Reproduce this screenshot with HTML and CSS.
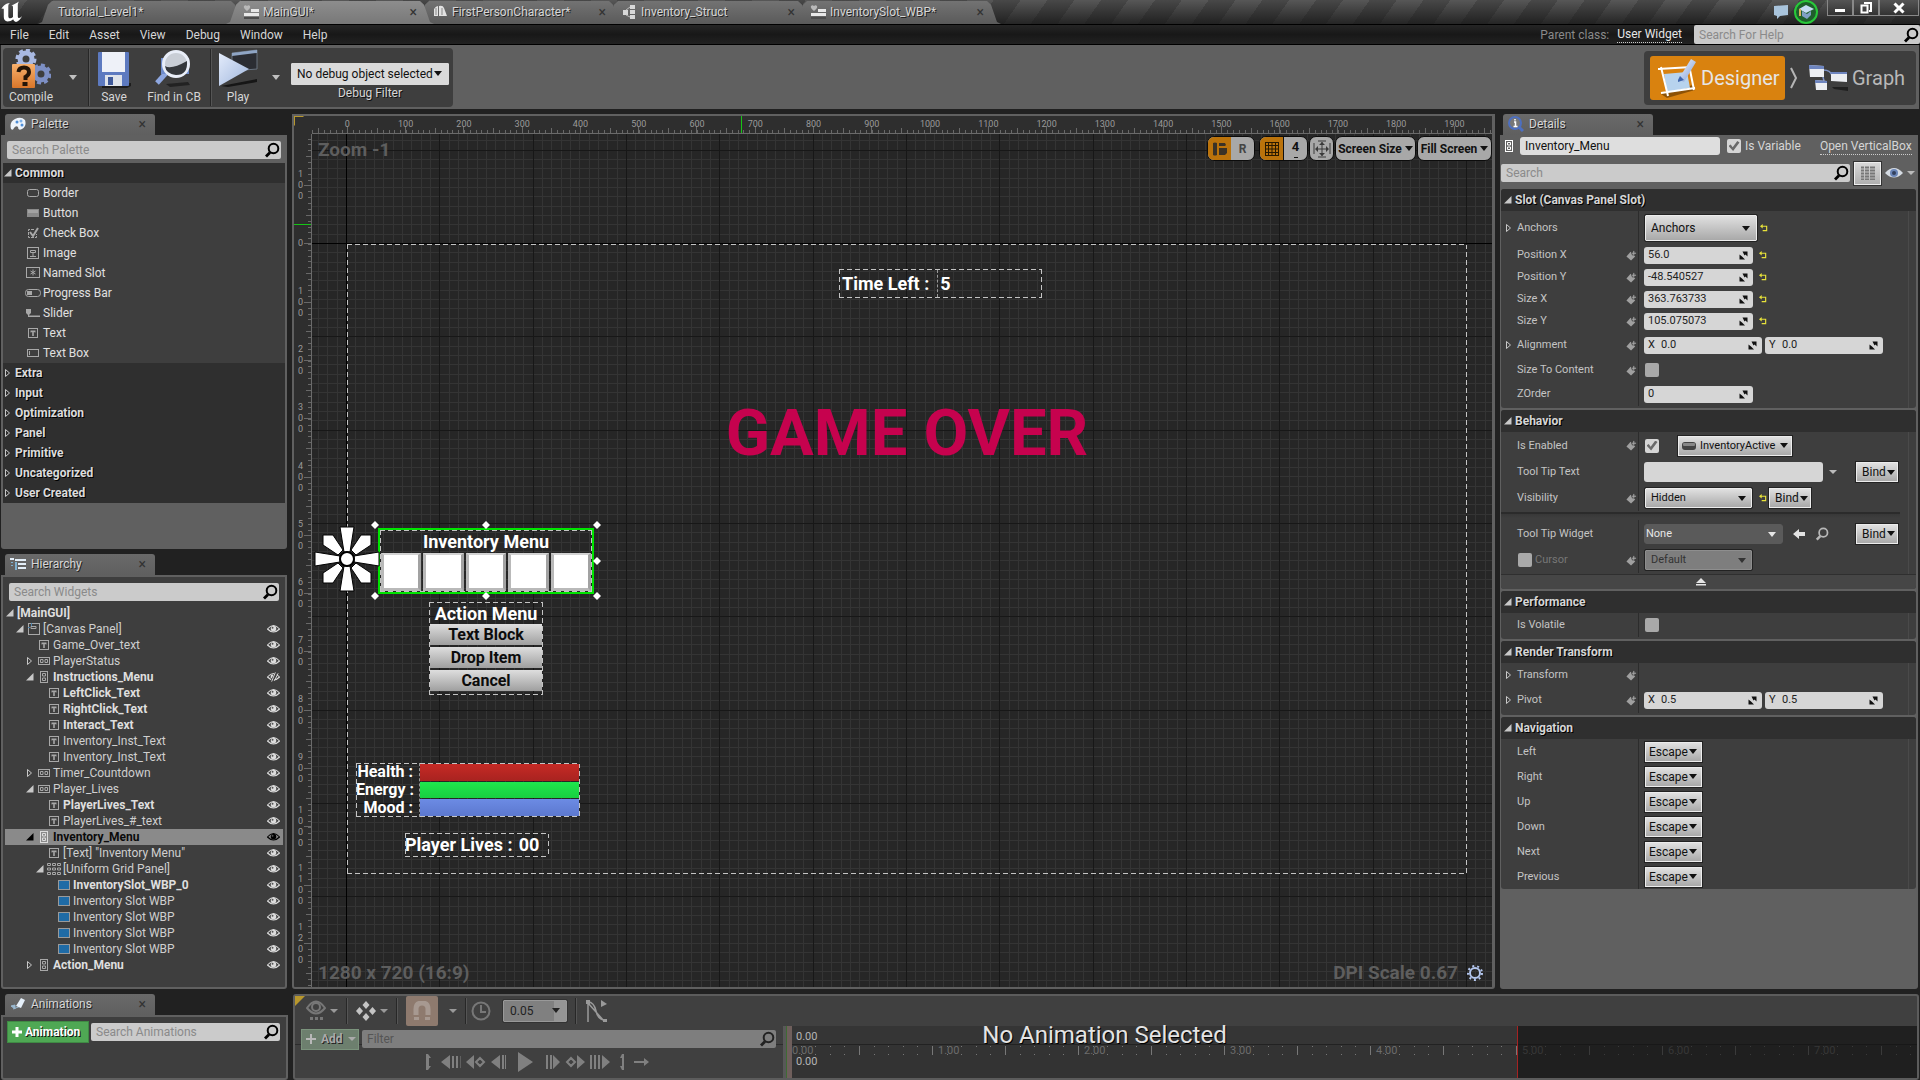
FILE: index.html
```html
<!DOCTYPE html>
<html lang="en">
<head>
<meta charset="utf-8">
<title>MainGUI - Widget Editor</title>
<link rel="stylesheet" href="styles.css">
</head>
<body>
<svg class="sprite" width="0" height="0" aria-hidden="true">
  <defs>
    <linearGradient id="g-blue" x1="0" y1="0" x2="1" y2="1"><stop offset="0" stop-color="#f4f8ff"/><stop offset="1" stop-color="#7d9bd6"/></linearGradient>
    <linearGradient id="g-play" x1="0" y1="0" x2="1" y2="1"><stop offset="0" stop-color="#e4ecfb"/><stop offset="1" stop-color="#9fb6dd"/></linearGradient>
    <linearGradient id="g-orange" x1="0" y1="0" x2="0" y2="1"><stop offset="0" stop-color="#f7b06c"/><stop offset="1" stop-color="#d9762a"/></linearGradient>
    <symbol id="i-search" viewBox="0 0 16 16"><circle cx="9.500" cy="6.500" r="4.800" fill="none" stroke="currentColor" stroke-width="2"/><path d="M6 10.500L2 14.500" stroke="currentColor" stroke-width="2.800"/></symbol>
    <symbol id="i-eye" viewBox="0 0 14 10"><path d="M0.500 5Q7 -2.500 13.500 5Q7 11.500 0.500 5z" fill="none" stroke="currentColor" stroke-width="1.200"/><circle cx="7" cy="4.600" r="3" fill="currentColor"/><circle cx="6" cy="3.600" r="1" fill="#555"/></symbol>
    <symbol id="i-eye-off" viewBox="0 0 14 10"><path d="M0.500 5Q7 -2.500 13.500 5Q7 11.500 0.500 5z" fill="none" stroke="currentColor" stroke-width="1.200"/><path d="M4 3l3-1-1 5-2-1z" fill="currentColor"/><path d="M10 0L5 10" stroke="#3e3e3e" stroke-width="3"/><path d="M9 0L5 10M12 1L8 9" stroke="currentColor" stroke-width="1"/></symbol>
    <symbol id="i-open" viewBox="0 0 8 8"><path d="M7.500 0v7.500H0z" fill="currentColor"/></symbol>
    <symbol id="i-closed" viewBox="0 0 8 8"><path d="M1.500 0.500L5.500 4L1.500 7.500z" fill="none" stroke="currentColor"/></symbol>
    <symbol id="i-text" viewBox="0 0 10 10"><rect x="0.500" y="0.500" width="9" height="9" fill="none" stroke="currentColor"/><path d="M2.500 2.500h5v2h-1v-0.500h-0.700v4h-1.600v-4h-0.700v0.500h-1z" fill="currentColor"/></symbol>
    <symbol id="i-hbox" viewBox="0 0 12 8"><rect x="0.500" y="0.500" width="11" height="7" fill="none" stroke="currentColor"/><path d="M2.500 2.500h2.500v3h-2.500zM7 2.500h2.500v3h-2.500z" fill="none" stroke="currentColor"/></symbol>
    <symbol id="i-vbox" viewBox="0 0 8 12"><rect x="0.500" y="0.500" width="7" height="11" fill="none" stroke="currentColor"/><path d="M2.500 2.500h3v2.500h-3zM2.500 7h3v2.500h-3z" fill="none" stroke="currentColor"/></symbol>
    <symbol id="i-canvas" viewBox="0 0 12 12"><rect x="0.500" y="0.500" width="11" height="11" fill="none" stroke="currentColor"/><path d="M3 3.500h5v2h-5z" fill="none" stroke="currentColor"/><path d="M3.500 0v3M0 4.500h2" stroke="#4f86b0"/></symbol>
    <symbol id="i-grid" viewBox="0 0 14 12"><path d="M0.500 0.500h3v2h-3zM5.500 0.500h3v2h-3zM10.500 0.500h3v2h-3zM0.500 5h3v2h-3zM5.500 5h3v2h-3zM10.500 5h3v2h-3zM0.500 9.500h3v2h-3zM5.500 9.500h3v2h-3zM10.500 9.500h3v2h-3z" fill="none" stroke="currentColor"/></symbol>
    <symbol id="i-slot" viewBox="0 0 12 10"><rect x="0.500" y="0.500" width="11" height="9" fill="#1f6ba6" stroke="#9a9a9a"/></symbol>
    <symbol id="i-key" viewBox="0 0 12 12"><path d="M5 2L10 7L5.500 11.500L0.500 7z" fill="#a0a0a0"/><path d="M8.500 0v6M5.500 3h6" stroke="#3e3e3e" stroke-width="3"/><path d="M8.500 1v5M6 3.500h5" stroke="#b0b0b0"/></symbol>
    <symbol id="i-reset" viewBox="0 0 9 9"><path d="M2 2.500h5.500v5H3" fill="none" stroke="#e8e23a" stroke-width="1.300"/><path d="M0 2.500L3 0v5z" fill="#e8e23a"/></symbol>
    <symbol id="i-spin" viewBox="0 0 9 9"><path d="M3.500 0.500H8.500v5L6.500 3.500L5.500 4.500zM0.500 3.500v5h5.500L4 6.500L3 5.500z" fill="currentColor"/></symbol>
    <symbol id="i-widget" viewBox="0 0 16 16"><path d="M4 7Q0 4 1 2Q2.500 0.500 4 2Q5.500 0.500 7 2Q8 4 4 7z" fill="#b9b9b9"/><path d="M8 5h8v3H8zM1 9h15v3H1z" fill="#e8e8e8"/><path d="M1 13h15v2H1z" fill="#4c4c4c"/></symbol>
  </defs>
</svg>

<header class="tabs">
  <svg class="ue-logo" viewBox="0 0 24 22"><path d="M0.500 8C2.500 4 5 2.500 9 2C7.500 3 7.300 4 7.300 5.500V15c0 1.500 0.700 2.300 1.800 2.300c1 0 2-0.500 2.900-1.300V6.500c0-1.500-0.400-2-1.700-2.200C13 3.500 15 2.500 18 0.500C17 2 16.800 3 16.800 5v10c0 1.500 0.500 2 1.300 2c0.900 0 2-0.800 3-2C19.500 18.500 17.500 20 15 21c-1.500-0.500-2.400-1.400-2.800-2.700C10.500 19.800 8.600 20.500 6.500 20.500C4 20 2.800 18.500 2.800 16V8.500C2.800 7.300 1.800 7 0.500 8z" fill="#fff"/></svg>
  <div class="tab first"><span>Tutorial_Level1*</span></div>
  <div class="tab active"><svg class="ic16"><use href="#i-widget"/></svg><span>MainGUI*</span><button class="x" aria-label="Close">×</button></div>
  <div class="tab"><svg class="ic16" viewBox="0 0 16 16"><path d="M2 12V5q2-3 4-3v10zM7 12V2q4-1 5 2l3 8z" fill="#e2e2e2"/><path d="M4 4v7M10 4v7" stroke="#888"/></svg><span>FirstPersonCharacter*</span><button class="x" aria-label="Close">×</button></div>
  <div class="tab"><svg class="ic16" viewBox="0 0 16 16"><path d="M2 6h5v5H2zM9 1h5v4H9zM9 6h5v4H9zM9 11h5v4H9z" fill="#d8d8d8"/><path d="M5 6L9 3M5 11L9 13" stroke="#bbb"/></svg><span>Inventory_Struct</span><button class="x" aria-label="Close">×</button></div>
  <div class="tab"><svg class="ic16"><use href="#i-widget"/></svg><span>InventorySlot_WBP*</span><button class="x" aria-label="Close">×</button></div>
  <div class="window-tools">
    <svg width="16" height="16" viewBox="0 0 16 16"><path d="M1 2L15 1V11L7 12L4 15V12L1 11z" fill="#a9c4dc"/></svg>
    <svg width="24" height="24" viewBox="0 0 24 24"><circle cx="12" cy="12" r="11" fill="#1f5f2b" stroke="#28c83a" stroke-width="2"/><path d="M12 5L20 9L12 13L5 9z" fill="#c6dcf3"/><path d="M8 11v5l5 3l4-4v-4l-4 3z" fill="#7f9fc4"/><path d="M6 9v7" stroke="#d8b35c" stroke-width="2"/></svg>
    <div class="win-btns">
      <button aria-label="Minimize"><svg width="12" height="12" viewBox="0 0 12 12"><path d="M1 7h10v3H1z" fill="#fff"/></svg></button>
      <button aria-label="Restore"><svg width="12" height="12" viewBox="0 0 12 12"><path d="M4 1h7v8h-2M1.500 3.500h6v7h-6z" fill="none" stroke="#fff" stroke-width="2"/></svg></button>
      <button class="wide" aria-label="Close window"><svg width="12" height="12" viewBox="0 0 12 12"><path d="M1.500 1.500l9 9M10.500 1.500l-9 9" stroke="#fff" stroke-width="3"/></svg></button>
    </div>
  </div>
</header>

<nav class="menu">
  <button>File</button><button>Edit</button><button>Asset</button><button>View</button><button>Debug</button><button>Window</button><button>Help</button>
  <div class="menu-right"><span class="dim">Parent class:</span><a href="#">User Widget</a>
    <div class="search help"><input type="text" placeholder="Search For Help" aria-label="Search For Help"><svg><use href="#i-search"/></svg></div>
  </div>
</nav>

<div class="toolbar">
  <div class="tool-group">
    <button class="tool compile"><svg width="40" height="40" viewBox="0 0 40 40"><circle cx="15" cy="10" r="6" fill="none" stroke="#a9b9e2" stroke-width="5"/><circle cx="15" cy="10" r="9" fill="none" stroke="#a9b9e2" stroke-width="3" stroke-dasharray="4 3"/><circle cx="30" cy="25" r="6" fill="none" stroke="#7d8fc4" stroke-width="5"/><circle cx="30" cy="25" r="9" fill="none" stroke="#7d8fc4" stroke-width="3" stroke-dasharray="4 3"/><rect x="1" y="15" width="23" height="24" rx="1" fill="url(#g-orange)"/><path d="M7.500 23Q8 18.500 13 18.500T18 23Q18 26 14.500 28V31" fill="none" stroke="#241508" stroke-width="4"/><rect x="11.500" y="33" width="5" height="4" fill="#241508"/></svg><span>Compile</span></button>
    <button class="drop-arrow" aria-label="Compile options"></button>
    <i class="sep"></i>
    <button class="tool save"><svg width="40" height="40" viewBox="0 0 40 40"><path d="M8 37l29-3v3l-4 2H8z" fill="#1c1c1c"/><rect x="4" y="3" width="31" height="34" rx="1" fill="#5d7ac0"/><rect x="8" y="3" width="23" height="20" fill="#eef1f8"/><rect x="11" y="26" width="17" height="11" fill="#dfe3ea"/><rect x="14" y="28" width="5" height="8" fill="#3f5999"/></svg><span>Save</span></button>
    <button class="tool find"><svg width="40" height="40" viewBox="0 0 40 40"><path d="M12 35l22-2 2 3-20 2z" fill="#222"/><path d="M12 24L3 34" stroke="#8ea7e0" stroke-width="5"/><path d="M7 9h28v16H7z" fill="#6f8ccb"/><circle cx="22" cy="15" r="12.500" fill="#c9ced6" stroke="#e9eef8" stroke-width="3"/><path d="M11 17q6 4 22-5q1 14-11 14q-10-1-11-9z" fill="#35383c"/></svg><span>Find in CB</span></button>
    <i class="sep"></i>
    <button class="tool play"><svg width="40" height="40" viewBox="0 0 40 40"><path d="M14 4l25-3v19l-25 2z" fill="#2b2d33" stroke="#68727f"/><path d="M14 4l25-3v3l-25 3z" fill="#8fa5c5"/><path d="M3 37l36-7v3L10 38z" fill="#161616"/><path d="M1 4L31 20L1 37z" fill="url(#g-play)"/></svg><span>Play</span></button>
    <button class="drop-arrow" aria-label="Play options"></button>
    <div class="debug"><div class="combo flat"><select aria-label="Debug Filter"><option>No debug object selected</option></select></div><span>Debug Filter</span></div>
  </div>
  <div class="modes">
    <button class="mode on"><svg width="40" height="44" viewBox="0 0 40 44"><path d="M4 38L36 29l2 5-28 8z" fill="#8d5206"/><path d="M7 18l23-2 3 16-23 4z" fill="#b7d3ee"/><path d="M1 13l34-2M4 37l34-5M4 11l7 29M32 9l5 25" stroke="#fff" stroke-width="2"/><path d="M21 24l13-21 5 3-12 20z" fill="url(#g-blue)"/><path d="M21 24l2-4 4 4-6 2z" fill="#3f66ad"/></svg><span>Designer</span></button>
    <svg width="8" height="22" viewBox="0 0 8 22"><path d="M1 1l5 10-5 10" fill="none" stroke="#b5b5b5" stroke-width="2"/></svg>
    <button class="mode off"><svg width="40" height="28" viewBox="0 0 40 28"><path d="M24 23h16v4L26 25z" fill="#1f1f1f"/><path d="M15 6q8 0 9 6M14 9l2 8" fill="none" stroke="#7f94c9" stroke-width="1.500"/><path d="M1 1l15 1v11H2zM23 8h16v10l-16-1zM7 16l12 1v9H8z" fill="#eceef2"/><path d="M1 1l15 1v3H1zM23 8h16v2H23zM7 16l12 1v2H7z" fill="#6e85bf"/></svg><span>Graph</span></button>
  </div>
</div>

<main class="workspace">
  <aside class="left">
    <section class="panel palette">
      <h2 class="ptab"><svg width="16" height="14" viewBox="0 0 16 14"><path d="M1 12Q-1 5 5 2Q11-1 15 3Q17 9 12 12Q8 14 8 10Q6 8 4 11Q3 14 1 12z" fill="#eef4fb"/><circle cx="7" cy="5" r="1.500" fill="#4f8fd8"/><circle cx="11" cy="4" r="1.500" fill="#7fb2e8"/><circle cx="12" cy="8" r="1.500" fill="#4f8fd8"/></svg>Palette<button class="x" aria-label="Close">×</button></h2>
      <div class="pbody">
        <div class="search"><input type="text" placeholder="Search Palette" aria-label="Search Palette"><svg><use href="#i-search"/></svg></div>
        <ul class="plist">
          <li class="cat"><svg class="tri"><use href="#i-open"/></svg>Common</li>
          <li><svg width="12" height="8" viewBox="0 0 12 8"><rect x="0.500" y="0.500" width="11" height="7" rx="2" fill="none" stroke="currentColor"/></svg>Border</li>
          <li><svg width="12" height="8" viewBox="0 0 12 8"><rect width="12" height="8" fill="#8a8a8a"/><rect x="1" y="1" width="10" height="3" fill="#a2a2a2"/></svg>Button</li>
          <li><svg width="12" height="12" viewBox="0 0 12 12"><path d="M7 2.500H1.500v8h8V7" fill="none" stroke="currentColor" stroke-dasharray="3 1"/><path d="M3 5l3 4 5-8" fill="none" stroke="currentColor" stroke-width="2"/></svg>Check Box</li>
          <li><svg width="12" height="12" viewBox="0 0 12 12"><rect x="0.500" y="0.500" width="11" height="11" fill="none" stroke="currentColor"/><path d="M6 5v4M3 9.500h6M3.500 3.500h5v2h-5z" stroke="currentColor" fill="none"/></svg>Image</li>
          <li><svg width="14" height="12" viewBox="0 0 14 12"><rect x="0.500" y="0.500" width="13" height="10" fill="none" stroke="currentColor"/><path d="M7 2.500v6M4.500 4l5 3M9.500 4l-5 3" stroke="currentColor"/></svg>Named Slot</li>
          <li><svg width="16" height="8" viewBox="0 0 16 8"><rect x="0.500" y="0.500" width="15" height="7" rx="3" fill="none" stroke="currentColor"/><rect x="2" y="2" width="5" height="4" fill="currentColor"/></svg>Progress Bar</li>
          <li><svg width="14" height="8" viewBox="0 0 14 8"><path d="M0 0h5v4l-2 2v0.500h11V8H2V6L0 4z" fill="currentColor"/></svg>Slider</li>
          <li><svg width="10" height="10"><use href="#i-text"/></svg>Text</li>
          <li><svg width="12" height="8" viewBox="0 0 12 8"><rect x="0.500" y="0.500" width="11" height="7" fill="none" stroke="currentColor"/><path d="M2.500 2v4" stroke="currentColor"/></svg>Text Box</li>
          <li class="cat"><svg class="tri"><use href="#i-closed"/></svg>Extra</li>
          <li class="cat"><svg class="tri"><use href="#i-closed"/></svg>Input</li>
          <li class="cat"><svg class="tri"><use href="#i-closed"/></svg>Optimization</li>
          <li class="cat"><svg class="tri"><use href="#i-closed"/></svg>Panel</li>
          <li class="cat"><svg class="tri"><use href="#i-closed"/></svg>Primitive</li>
          <li class="cat"><svg class="tri"><use href="#i-closed"/></svg>Uncategorized</li>
          <li class="cat"><svg class="tri"><use href="#i-closed"/></svg>User Created</li>
        </ul>
      </div>
    </section>
    <section class="panel hierarchy">
      <h2 class="ptab"><svg width="16" height="12" viewBox="0 0 16 12"><path d="M0 0h4v2H0zM5 1h11v2H5zM8 5h8v2H8zM8 9h8v2H8z" fill="#e3eef8"/><path d="M5 4h2v8H5zM1 4h2v1H1zM1 7h2v1H1z" fill="#7fb0cf"/></svg>Hierarchy<button class="x" aria-label="Close">×</button></h2>
      <div class="pbody dark">
        <div class="search"><input type="text" placeholder="Search Widgets" aria-label="Search Widgets"><svg><use href="#i-search"/></svg></div>
        <ul class="tree">
          <li class="l0 b"><svg class="tri"><use href="#i-open"/></svg><span>[MainGUI]</span></li>
          <li class="l1"><svg class="tri"><use href="#i-open"/></svg><i><svg width="12" height="12"><use href="#i-canvas"/></svg></i><span>[Canvas Panel]</span><svg class="eye"><use href="#i-eye"/></svg></li>
          <li class="l2"><svg class="tri"></svg><i><svg width="10" height="10"><use href="#i-text"/></svg></i><span>Game_Over_text</span><svg class="eye"><use href="#i-eye"/></svg></li>
          <li class="l2"><svg class="tri"><use href="#i-closed"/></svg><i><svg width="12" height="8"><use href="#i-hbox"/></svg></i><span>PlayerStatus</span><svg class="eye"><use href="#i-eye"/></svg></li>
          <li class="l2 b"><svg class="tri"><use href="#i-open"/></svg><i><svg width="8" height="12"><use href="#i-vbox"/></svg></i><span>Instructions_Menu</span><svg class="eye"><use href="#i-eye-off"/></svg></li>
          <li class="l3 b"><svg class="tri"></svg><i><svg width="10" height="10"><use href="#i-text"/></svg></i><span>LeftClick_Text</span><svg class="eye"><use href="#i-eye"/></svg></li>
          <li class="l3 b"><svg class="tri"></svg><i><svg width="10" height="10"><use href="#i-text"/></svg></i><span>RightClick_Text</span><svg class="eye"><use href="#i-eye"/></svg></li>
          <li class="l3 b"><svg class="tri"></svg><i><svg width="10" height="10"><use href="#i-text"/></svg></i><span>Interact_Text</span><svg class="eye"><use href="#i-eye"/></svg></li>
          <li class="l3"><svg class="tri"></svg><i><svg width="10" height="10"><use href="#i-text"/></svg></i><span>Inventory_Inst_Text</span><svg class="eye"><use href="#i-eye"/></svg></li>
          <li class="l3"><svg class="tri"></svg><i><svg width="10" height="10"><use href="#i-text"/></svg></i><span>Inventory_Inst_Text</span><svg class="eye"><use href="#i-eye"/></svg></li>
          <li class="l2"><svg class="tri"><use href="#i-closed"/></svg><i><svg width="12" height="8"><use href="#i-hbox"/></svg></i><span>Timer_Countdown</span><svg class="eye"><use href="#i-eye"/></svg></li>
          <li class="l2"><svg class="tri"><use href="#i-open"/></svg><i><svg width="12" height="8"><use href="#i-hbox"/></svg></i><span>Player_Lives</span><svg class="eye"><use href="#i-eye"/></svg></li>
          <li class="l3 b"><svg class="tri"></svg><i><svg width="10" height="10"><use href="#i-text"/></svg></i><span>PlayerLives_Text</span><svg class="eye"><use href="#i-eye"/></svg></li>
          <li class="l3"><svg class="tri"></svg><i><svg width="10" height="10"><use href="#i-text"/></svg></i><span>PlayerLives_#_text</span><svg class="eye"><use href="#i-eye"/></svg></li>
          <li class="l2 b sel"><svg class="tri"><use href="#i-open"/></svg><i><svg width="8" height="12"><use href="#i-vbox"/></svg></i><span>Inventory_Menu</span><svg class="eye"><use href="#i-eye"/></svg></li>
          <li class="l3"><svg class="tri"></svg><i><svg width="10" height="10"><use href="#i-text"/></svg></i><span>[Text] "Inventory Menu"</span><svg class="eye"><use href="#i-eye"/></svg></li>
          <li class="l3"><svg class="tri"><use href="#i-open"/></svg><i><svg width="14" height="12"><use href="#i-grid"/></svg></i><span>[Uniform Grid Panel]</span><svg class="eye"><use href="#i-eye"/></svg></li>
          <li class="l4 b"><svg class="tri"></svg><i><svg width="12" height="10"><use href="#i-slot"/></svg></i><span>InventorySlot_WBP_0</span><svg class="eye"><use href="#i-eye"/></svg></li>
          <li class="l4"><svg class="tri"></svg><i><svg width="12" height="10"><use href="#i-slot"/></svg></i><span>Inventory Slot WBP</span><svg class="eye"><use href="#i-eye"/></svg></li>
          <li class="l4"><svg class="tri"></svg><i><svg width="12" height="10"><use href="#i-slot"/></svg></i><span>Inventory Slot WBP</span><svg class="eye"><use href="#i-eye"/></svg></li>
          <li class="l4"><svg class="tri"></svg><i><svg width="12" height="10"><use href="#i-slot"/></svg></i><span>Inventory Slot WBP</span><svg class="eye"><use href="#i-eye"/></svg></li>
          <li class="l4"><svg class="tri"></svg><i><svg width="12" height="10"><use href="#i-slot"/></svg></i><span>Inventory Slot WBP</span><svg class="eye"><use href="#i-eye"/></svg></li>
          <li class="l2 b"><svg class="tri"><use href="#i-closed"/></svg><i><svg width="8" height="12"><use href="#i-vbox"/></svg></i><span>Action_Menu</span><svg class="eye"><use href="#i-eye"/></svg></li>
        </ul>
      </div>
    </section>
  </aside>

  <section class="designer corner">
    <div class="ruler-h"><ol><li></li><li>0</li><li>100</li><li>200</li><li>300</li><li>400</li><li>500</li><li>600</li><li>700</li><li>800</li><li>900</li><li>1000</li><li>1100</li><li>1200</li><li>1300</li><li>1400</li><li>1500</li><li>1600</li><li>1700</li><li>1800</li><li>1900</li><li></li></ol><b class="cursor-mark"></b></div>
    <div class="ruler-v"><ol><li></li><li>1<br>0<br>0</li><li>0</li><li>1<br>0<br>0</li><li>2<br>0<br>0</li><li>3<br>0<br>0</li><li>4<br>0<br>0</li><li>5<br>0<br>0</li><li>6<br>0<br>0</li><li>7<br>0<br>0</li><li>8<br>0<br>0</li><li>9<br>0<br>0</li><li>1<br>0<br>0<br>0</li><li>1<br>1<br>0<br>0</li><li>1<br>2<br>0<br>0</li><li></li></ol><b class="cursor-mark"></b></div>
    <div class="canvas">
      <svg class="grid-bg" aria-hidden="true">
        <defs><pattern id="grid" x="34" y="109" width="280" height="280" patternUnits="userSpaceOnUse">
          <path d="M9.500 0v280M19.500 0v280M28.500 0v280M37.500 0v280M47.500 0v280M56.500 0v280M65.500 0v280M75.500 0v280M84.500 0v280M103.500 0v280M112.500 0v280M121.500 0v280M131.500 0v280M140.500 0v280M149.500 0v280M159.500 0v280M168.500 0v280M177.500 0v280M196.500 0v280M205.500 0v280M215.500 0v280M224.500 0v280M233.500 0v280M243.500 0v280M252.500 0v280M261.500 0v280M271.500 0v280M0 9.500h280M0 19.500h280M0 28.500h280M0 37.500h280M0 47.500h280M0 56.500h280M0 65.500h280M0 75.500h280M0 84.500h280M0 103.500h280M0 112.500h280M0 121.500h280M0 131.500h280M0 140.500h280M0 149.500h280M0 159.500h280M0 168.500h280M0 177.500h280M0 196.500h280M0 205.500h280M0 215.500h280M0 224.500h280M0 233.500h280M0 243.500h280M0 252.500h280M0 261.500h280M0 271.500h280" stroke="#343434"/>
          <path d="M0.500 0v280M93.500 0v280M187.500 0v280M0 0.500h280M0 93.500h280M0 187.500h280" stroke="#171717"/>
        </pattern></defs>
        <rect width="100%" height="100%" fill="url(#grid)"/>
        <path d="M34.500 0v2000M0 109.500h4000" stroke="#000"/>
      </svg>
      <p class="hud zoom">Zoom -1</p>
      <p class="hud res">1280 x 720 (16:9)</p>
      <p class="hud dpi">DPI Scale 0.67 <svg width="18" height="18" viewBox="0 0 18 18"><circle cx="9" cy="9" r="5" fill="none" stroke="#b3c6ee" stroke-width="2"/><circle cx="9" cy="9" r="7" fill="none" stroke="#b3c6ee" stroke-width="2" stroke-dasharray="2 3"/></svg></p>

      <div class="stage">
        <div class="widget timer dash"><span>Time Left :</span><span class="num">5</span></div>
        <p class="widget game-over">GAME OVER</p>
        <div class="widget inventory"><div class="dash inv-inner"><h3>Inventory Menu</h3><div class="slots"><i></i><i></i><i></i><i></i><i></i></div></div></div>
        <svg class="widget handles" width="230" height="80" viewBox="0 0 230 80"><path d="M4 0l4 4-4 4-4-4zM115 0l4 4-4 4-4-4zM226 0l4 4-4 4-4-4zM226 36l4 4-4 4-4-4zM4 71l4 4-4 4-4-4zM115 71l4 4-4 4-4-4zM226 71l4 4-4 4-4-4z" fill="#fff"/></svg>
        <svg class="widget anchor" width="66" height="66" viewBox="-33 -33 66 66"><g fill="#fff" stroke="#000" stroke-width="1"><path d="M-7-32H7L3-7H-3z"/><path d="M-7-32H7L3-7H-3z" transform="rotate(90)"/><path d="M-7-32H7L3-7H-3z" transform="rotate(180)"/><path d="M-7-32H7L3-7H-3z" transform="rotate(270)"/><path d="M-24-24H-14L-4-9L-9-4L-24-14z"/><path d="M-24-24H-14L-4-9L-9-4L-24-14z" transform="rotate(90)"/><path d="M-24-24H-14L-4-9L-9-4L-24-14z" transform="rotate(180)"/><path d="M-24-24H-14L-4-9L-9-4L-24-14z" transform="rotate(270)"/><circle r="7" stroke-width="2"/></g></svg>
        <div class="widget action dash"><h3>Action Menu</h3><button>Text Block</button><button>Drop Item</button><button>Cancel</button></div>
        <div class="widget status dash"><div class="names"><span>Health :</span><span>Energy :</span><span>Mood :</span></div><div class="bars"><i class="red"></i><i class="green"></i><i class="blue"></i></div></div>
        <div class="widget lives dash"><span>Player Lives :</span><span>00</span></div>
      </div>

      <div class="view-tools">
        <div class="pair"><button class="on" aria-label="Localization preview"><svg width="16" height="14" viewBox="0 0 16 14"><path d="M1 1q2-1 4 0v12q-2 1-4 0zM7 1h6l1 2-1 1H7zM7 6h8v5l-2 2H7z" fill="#3a3226"/></svg></button><button class="r">R</button></div>
        <div class="pair"><button class="on" aria-label="Grid snapping"><svg width="14" height="14" viewBox="0 0 14 14"><path d="M0.500 0v14M3.500 0v14M7 0v14M10.500 0v14M13.500 0v14M0 0.500h14M0 3.500h14M0 7h14M0 10.500h14M0 13.500h14" stroke="#2a1a00"/></svg></button><button class="snap">4</button></div>
        <button class="pill" aria-label="Zoom to fit"><svg width="18" height="18" viewBox="0 0 18 18"><path d="M1 3v11M17 3v11M5 1h8M5 17h8M9 2v14M3 9h12" stroke="#3a3a3a" fill="none"/><path d="M6 5l3-3 3 3zM6 13l3 3 3-3zM5 6v6L2 9zM13 6v6l3-3z" fill="#3a3a3a"/></svg></button>
        <button class="pill txt screen">Screen Size</button>
        <button class="pill txt fill">Fill Screen</button>
      </div>
    </div>
  </section>

  <aside class="panel details">
    <h2 class="ptab"><svg width="16" height="16" viewBox="0 0 16 16"><path d="M11 11l4 4" stroke="#4d6fc0" stroke-width="3"/><circle cx="7" cy="7" r="6" fill="#777" stroke="#4d6fc0" stroke-width="2"/><path d="M7 3v1.500M6 6h1.500v4M5.500 10.500h4" stroke="#fff" stroke-width="1.500" fill="none"/></svg>Details<button class="x" aria-label="Close">×</button></h2>
    <div class="pbody">
      <div class="dname"><svg width="8" height="12"><use href="#i-vbox"/></svg><input class="name" type="text" value="Inventory_Menu" aria-label="Widget name"><input type="checkbox" id="isvar" checked><label for="isvar">Is Variable</label><a href="#">Open VerticalBox</a></div>
      <div class="dsearch"><div class="search"><input type="text" placeholder="Search" aria-label="Search details"><svg><use href="#i-search"/></svg></div><button class="matrix" aria-label="Property matrix"><svg width="14" height="14" viewBox="0 0 14 14"><path d="M0 1.500h3M4 1.500h4M9 1.500h5M0 4.500h3M4 4.500h4M9 4.500h5M0 7.500h3M4 7.500h4M9 7.500h5M0 10.500h3M4 10.500h4M9 10.500h5M0 13.500h3M4 13.500h4M9 13.500h5" stroke="#777" stroke-width="2"/></svg></button><svg width="18" height="12" viewBox="0 0 18 12"><path d="M0 6Q9-4 18 6Q9 15 0 6z" fill="#d5dbe3"/><circle cx="9" cy="6" r="4" fill="#6b86b8"/><circle cx="9" cy="6" r="2" fill="#33415e"/></svg><i class="arrow"></i></div>

      <section class="group">
        <h3><svg class="tri"><use href="#i-open"/></svg>Slot (Canvas Panel Slot)</h3>
        <div class="rows">
          <div class="row h33"><div class="lab"><svg class="tri"><use href="#i-closed"/></svg><label for="anchors">Anchors</label></div><div class="combo w112 tall"><select id="anchors"><option>Anchors</option></select></div><svg class="reset"><use href="#i-reset"/></svg></div>
          <div class="row h22"><div class="lab"><label for="px">Position X</label><svg class="key"><use href="#i-key"/></svg></div><div class="num-in w109"><input id="px" type="text" value="56.0"><svg><use href="#i-spin"/></svg></div><svg class="reset"><use href="#i-reset"/></svg></div>
          <div class="row h22"><div class="lab"><label for="py">Position Y</label><svg class="key"><use href="#i-key"/></svg></div><div class="num-in w109"><input id="py" type="text" value="-48.540527"><svg><use href="#i-spin"/></svg></div><svg class="reset"><use href="#i-reset"/></svg></div>
          <div class="row h22"><div class="lab"><label for="sx">Size X</label><svg class="key"><use href="#i-key"/></svg></div><div class="num-in w109"><input id="sx" type="text" value="363.763733"><svg><use href="#i-spin"/></svg></div><svg class="reset"><use href="#i-reset"/></svg></div>
          <div class="row h22"><div class="lab"><label for="sy">Size Y</label><svg class="key"><use href="#i-key"/></svg></div><div class="num-in w109"><input id="sy" type="text" value="105.075073"><svg><use href="#i-spin"/></svg></div><svg class="reset"><use href="#i-reset"/></svg></div>
          <div class="row h26"><div class="lab"><svg class="tri"><use href="#i-closed"/></svg><span>Alignment</span><svg class="key"><use href="#i-key"/></svg></div><div class="num-in w118"><label for="ax">X</label><input id="ax" type="text" value="0.0"><svg><use href="#i-spin"/></svg></div><div class="num-in w118"><label for="ay">Y</label><input id="ay" type="text" value="0.0"><svg><use href="#i-spin"/></svg></div></div>
          <div class="row h24"><div class="lab"><label for="stc">Size To Content</label><svg class="key"><use href="#i-key"/></svg></div><input type="checkbox" id="stc"></div>
          <div class="row h24"><div class="lab"><label for="zo">ZOrder</label></div><div class="num-in w109"><input id="zo" type="text" value="0"><svg><use href="#i-spin"/></svg></div></div>
        </div>
      </section>

      <section class="group">
        <h3><svg class="tri"><use href="#i-open"/></svg>Behavior</h3>
        <div class="rows flush">
          <div class="row h27"><div class="lab"><label for="en">Is Enabled</label><svg class="key"><use href="#i-key"/></svg></div><input type="checkbox" id="en" checked><button class="btn bound"><svg width="14" height="8" viewBox="0 0 14 8"><rect width="14" height="8" rx="3" fill="#444"/><rect x="1" y="1" width="12" height="3" rx="1" fill="#888"/></svg>InventoryActive<i class="arrow"></i></button></div>
          <div class="row h26"><div class="lab"><label for="ttt">Tool Tip Text</label></div><input id="ttt" class="plain" type="text"><i class="arrow light"></i><button class="btn bind end">Bind<i class="arrow"></i></button></div>
          <div class="row h26"><div class="lab"><label for="vis">Visibility</label><svg class="key"><use href="#i-key"/></svg></div><div class="combo w109"><select id="vis"><option>Hidden</option></select></div><svg class="reset"><use href="#i-reset"/></svg><button class="btn bind">Bind<i class="arrow"></i></button></div>
          <hr>
          <div class="row h27"><div class="lab"><label for="ttw">Tool Tip Widget</label></div><div class="combo w139 darkc"><select id="ttw"><option>None</option></select></div><svg class="back" width="12" height="12" viewBox="0 0 12 12"><path d="M0 6l6-5v3h6v4H6v3z" fill="#e2e2e2"/></svg><svg class="mag" width="14" height="14"><use href="#i-search"/></svg><button class="btn bind end">Bind<i class="arrow"></i></button></div>
          <div class="row h26"><div class="lab cur"><input type="checkbox" id="cur"><label for="cur">Cursor</label><svg class="key"><use href="#i-key"/></svg></div><div class="combo w109 off"><select aria-label="Cursor" disabled><option>Default</option></select></div></div>
          <button class="more" aria-label="Hide advanced"><svg width="10" height="8" viewBox="0 0 10 8"><path d="M5 0l5 5H0zM0 6h10v1.500H0z" fill="#e6e6e6"/></svg></button>
        </div>
      </section>

      <section class="group">
        <h3><svg class="tri"><use href="#i-open"/></svg>Performance</h3>
        <div class="rows"><div class="row h24"><div class="lab"><label for="vol">Is Volatile</label></div><input type="checkbox" id="vol"></div></div>
      </section>

      <section class="group">
        <h3><svg class="tri"><use href="#i-open"/></svg>Render Transform</h3>
        <div class="rows">
          <div class="row h24"><div class="lab"><svg class="tri"><use href="#i-closed"/></svg><span>Transform</span><svg class="key"><use href="#i-key"/></svg></div></div>
          <div class="row h26"><div class="lab"><svg class="tri"><use href="#i-closed"/></svg><span>Pivot</span><svg class="key"><use href="#i-key"/></svg></div><div class="num-in w118"><label for="pvx">X</label><input id="pvx" type="text" value="0.5"><svg><use href="#i-spin"/></svg></div><div class="num-in w118"><label for="pvy">Y</label><input id="pvy" type="text" value="0.5"><svg><use href="#i-spin"/></svg></div></div>
        </div>
      </section>

      <section class="group">
        <h3><svg class="tri"><use href="#i-open"/></svg>Navigation</h3>
        <div class="rows flush">
          <div class="row h25"><div class="lab">Left</div><button class="btn esc">Escape<i class="arrow"></i></button></div>
          <div class="row h25"><div class="lab">Right</div><button class="btn esc">Escape<i class="arrow"></i></button></div>
          <div class="row h25"><div class="lab">Up</div><button class="btn esc">Escape<i class="arrow"></i></button></div>
          <div class="row h25"><div class="lab">Down</div><button class="btn esc">Escape<i class="arrow"></i></button></div>
          <div class="row h25"><div class="lab">Next</div><button class="btn esc">Escape<i class="arrow"></i></button></div>
          <div class="row h25"><div class="lab">Previous</div><button class="btn esc">Escape<i class="arrow"></i></button></div>
        </div>
      </section>
    </div>
  </aside>
</main>

<footer class="bottom">
  <section class="panel animations">
    <h2 class="ptab"><svg width="16" height="14" viewBox="0 0 16 14"><path d="M1 9l4-1v4zM3 12l8-3" stroke="#99b8d0" fill="#99b8d0"/><path d="M6 9l5-8 4 2-4 8z" fill="#e6f0fa"/></svg>Animations<button class="x" aria-label="Close">×</button></h2>
    <div class="pbody dark">
      <div class="anim-bar"><button class="add"><svg width="10" height="10" viewBox="0 0 10 10"><path d="M3.500 0h3v3.500H10v3H6.500V10h-3V6.500H0v-3h3.500z" fill="#fff"/></svg>Animation</button><div class="search"><input type="text" placeholder="Search Animations" aria-label="Search Animations"><svg><use href="#i-search"/></svg></div></div>
    </div>
  </section>
  <section class="sequencer corner">
    <div class="seq-tools">
      <svg width="20" height="22" viewBox="0 0 20 22"><path d="M1 8Q10-5 19 8Q10 19 1 8z" fill="none" stroke="#777" stroke-width="2"/><circle cx="10" cy="7" r="4" fill="none" stroke="#777" stroke-width="2"/><path d="M4 17h3v3H4zM9 17h3v3H9zM14 17h3v3h-3z" fill="#777"/></svg><i class="arrow"></i><i class="sep"></i>
      <svg width="20" height="20" viewBox="0 0 20 20"><path d="M10 0l3.500 4-3.500 4-3.500-4zM10 12l3.500 4-3.500 4-3.500-4zM3.500 6L7 10l-3.500 4L0 10zM16.500 6l3.500 4-3.500 4-3.500-4z" fill="#c4c4c4"/></svg><i class="arrow"></i><i class="sep"></i>
      <button class="magnet" aria-label="Snapping"><svg width="18" height="20" viewBox="0 0 18 20"><path d="M3 14V8q0-6 6-6t6 6v6" fill="none" stroke="#a79991" stroke-width="5"/><path d="M1 16h5v3H1zM12 16h5v3h-5z" fill="#a79991"/></svg></button><i class="arrow wide"></i><i class="sep tight"></i>
      <svg width="20" height="20" viewBox="0 0 20 20"><circle cx="10" cy="10" r="8.500" fill="none" stroke="#777" stroke-width="2"/><path d="M10 4v7h5" fill="none" stroke="#777" stroke-width="2"/></svg>
      <div class="combo snapc"><select aria-label="Time snapping"><option>0.05</option></select></div><i class="sep"></i>
      <svg width="22" height="24" viewBox="0 0 22 24"><path d="M3 23V3Q9 3 11 12T20 21M3 4L19 22" fill="none" stroke="#9a9a9a" stroke-width="1.500"/><path d="M1 1h4v4H1zM18 20h4v3h-4zM16 1l6 4-6 3z" fill="#9a9a9a"/></svg>
    </div>
    <div class="seq-body">
      <div class="seq-left">
        <div class="seq-filter"><button class="addtrack"><svg width="10" height="10" viewBox="0 0 10 10"><path d="M4 0h2v4h4v2H6v4H4V6H0V4h4z" fill="#b8b8b8"/></svg>Add<i class="arrow"></i></button><div class="search"><input type="text" placeholder="Filter" aria-label="Filter"><svg><use href="#i-search"/></svg></div></div>
        <svg class="transport" width="226" height="20" viewBox="0 0 226 20" fill="#808080"><path d="M0 2h2l3 4H3v8h2l-3 4H0zM24 3v14L15 10zM26 4h2v12h-2zM30 4h2v12h-2zM34 4h0.500v12h-0.500zM48 3v14l-8-7zM74 3v14l-9-7zM76 3h2v14h-2zM79 3h1v14h-1zM92 0l15 10-15 10zM120 3h2v14h-2zM124 3h2v14h-2zM127 3l7 7-7 7zM151 3l8 7-8 7zM164 3h2v14h-2zM168 3h2v14h-2zM172 3h2v14h-2zM176 3l8 7-8 7zM198 2h-2l-2 4h2v8h-2l2 4h2zM208 9h10V6l5 4-5 4v-3h-10z"/><path d="M54 6l4 4-4 4-4-4zM145 6l4 4-4 4-4-4z" fill="none" stroke="#808080" stroke-width="2"/></svg>
      </div>
      <div class="timeline">
        <b class="start"></b>
        <span class="t-now">0.00</span><span class="t-end">0.00</span>
        <ol><li>0.00</li><li>1.00</li><li>2.00</li><li>3.00</li><li>4.00</li><li class="out">5.00</li><li class="out">6.00</li><li class="out">7.00</li></ol>
      </div>
    </div>
    <p class="noanim">No Animation Selected</p>
  </section>
</footer>
</body>
</html>
```
FILE: styles.css
```css
* { box-sizing: border-box; }
html, body { height: 100%; }
body {
  margin: 0; min-height: 100vh; display: flex; flex-direction: column; overflow: hidden;
  background: #212121; color: #d6d6d6; font: 12px/16px Roboto, "Liberation Sans", sans-serif;
}
h2, h3, p, ul, ol, hr { margin: 0; padding: 0; font: inherit; list-style: none; border: 0; }
button, input, select { font: inherit; color: inherit; margin: 0; padding: 0; border: 0; background: none; }
i { font-style: normal; }
svg { flex: none; display: block; }
.sprite { position: absolute; }
.x { color: #333; font-size: 14px; line-height: 14px; margin-left: auto; }
.tri { width: 8px; height: 8px; }
.arrow { width: 0; height: 0; border: 5px solid transparent; border-top-color: #111; border-bottom: 0; flex: none; }
.sep { width: 2px; align-self: stretch; background: #272727; border-right: 1px solid #555; flex: none; }

/* window tabs */
.tabs {
  height: 25px; flex: none; display: flex; padding-left: 38px; position: relative;
  background: linear-gradient(rgba(20,20,20,0), rgba(20,20,20,.75)), repeating-linear-gradient(125deg, #575757 0 22px, #484848 22px 44px);
  border-bottom: 1px solid #000;
}
.ue-logo { position: absolute; left: 1px; top: 1px; width: 24px; height: 22px; }
.tab {
  width: 208px; margin-right: -19px; padding: 0 17px 0 17px; display: flex; align-items: center; gap: 4px;
  background: linear-gradient(#747474, #5a5a5a);
  clip-path: polygon(0 100%, 4px 92%, 10px 20%, 14px 4%, calc(100% - 14px) 4%, calc(100% - 10px) 20%, calc(100% - 4px) 92%, 100% 100%);
  text-shadow: 1px 1px #222;
}
.tab.first { padding-left: 20px; width: 207px; }
.tab.active { background: linear-gradient(#8e8e8e, #787878); z-index: 1; }
.ic16 { width: 16px; height: 16px; }
.window-tools { margin-left: auto; display: flex; gap: 5px; align-items: center; padding-right: 1px; }
.win-btns { display: flex; align-self: flex-start; margin-left: 4px; }
.win-btns button { width: 26px; height: 16px; border: 1px solid #888; border-top: 0; display: grid; place-items: center; background: linear-gradient(#555, #333); }
.win-btns .wide { width: 40px; }

.menu {
  height: 20px; flex: none; display: flex; align-items: center; padding-left: 10px; gap: 20px;
  background: linear-gradient(#252525, #181818 50%, #222); border-bottom: 1px solid #000;
}
.menu-right { margin-left: auto; display: flex; align-items: center; gap: 8px; height: 100%; }
.menu-right .dim { color: #8a8a8a; }
.menu-right a { color: #e6e6e6; text-decoration: none; border-bottom: 1px dotted #ccc; }
.search { display: flex; align-items: center; height: 18px; background: #cbcbcb; border-radius: 2px; padding-right: 1px; }
.search input { flex: 1; min-width: 0; padding-left: 5px; color: #222; outline: 0; }
.search input::placeholder { color: #8a8a8a; opacity: 1; }
.search svg { width: 16px; height: 16px; color: #000; }
.search.help { width: 226px; height: 19px; margin-left: 4px; }

/* toolbar */
.toolbar { height: 64px; flex: none; margin: 0 1px; padding: 3px 2px 2px; background: #606060; display: flex; justify-content: space-between; }
.tool-group { display: flex; background: #3e3e3e; border-radius: 4px; width: 450px; padding-left: 1px; text-shadow: 1px 1px #111; }
.tool-group .sep { margin: 1px 0; }
.tool { display: flex; flex-direction: column; align-items: center; padding-top: 1px; }
.tool.compile { width: 54px; margin-right: 3px; }
.compile + .drop-arrow { margin-right: 3px; }
.tool.save { width: 48px; }
.tool.find { width: 72px; }
.tool.play { width: 52px; }
.drop-arrow { width: 24px; height: 59px; display: grid; place-items: center; }
.drop-arrow::after { content: ""; border: 4px solid transparent; border-top: 5px solid #c0c0c0; border-bottom: 0; }
.debug { margin-left: 3px; display: flex; flex-direction: column; align-items: center; padding-top: 15px; }
.modes { display: flex; align-items: center; gap: 5px; width: 272px; background: #3e3e3e; border-radius: 4px; margin: 3px 1px 2px 0; padding: 4px 6px; font-size: 20px; line-height: 24px; color: #b8b8b8; }
.mode { display: flex; align-items: center; height: 44px; gap: 4px; }
.mode.on { background: #d9820f; border-radius: 3px; color: #e6e6e6; width: 135px; padding-left: 7px; }
.mode.off { margin-left: 5px; }

.combo { position: relative; display: flex; height: 20px; color: #111; }
.combo select { appearance: none; width: 100%; padding: 0 18px 0 5px; border: 1px solid #ececec; outline: 1px solid #222; border-radius: 1px; background: linear-gradient(#e0e0e0, #a9a9a9); color: inherit; opacity: 1; }
.combo::after { content: ""; position: absolute; right: 7px; top: 8px; border: 4px solid transparent; border-top: 5px solid currentColor; border-bottom: 0; }
.combo.flat { width: 158px; height: 22px; text-shadow: none; }
.combo.flat select { background: #dadada; outline: 0; padding-right: 0; border-color: #dadada; }
.combo.w112 { width: 112px; } .combo.w109 { width: 109px; padding: 0 1px; } .combo.w139 { width: 139px; }
.combo.tall { height: 26px; margin-left: 1px; } .combo.tall select { font-size: 12px; padding-left: 5px; } .combo.tall::after { top: 11px; }
.combo.darkc { color: #e6e6e6; } .combo.darkc select { background: #5a5a5a; border-color: #5a5a5a; outline: 0; padding-left: 1px; border-radius: 3px; }
.combo.off { color: #333; } .combo.off select { background: #7e7e7e; border-color: #8e8e8e; }

/* docked panels */
.workspace { flex: 1; min-height: 0; display: flex; padding: 5px 2px 0 1px; }
.left { width: 286px; flex: none; display: flex; flex-direction: column; gap: 5px; margin-right: 5px; }
.panel { display: flex; flex-direction: column; min-height: 0; }
.ptab { width: 150px; height: 21px; margin-left: 4px; padding: 0 9px 2px 5px; display: flex; align-items: center; gap: 5px; background: linear-gradient(#6a6a6a, #5f5f5f); border-radius: 3px 3px 0 0; text-shadow: 1px 1px #222; flex: none; }
.pbody { flex: 1; background: #606060; border-radius: 0 0 3px 3px; min-height: 0; }
.palette, .hierarchy { flex: 1; }
.palette .pbody { padding: 6px 2px; }
.palette .search { margin: 0 4px 4px; }
.dark { border: 2px solid #606060; background: #3e3e3e; padding-top: 6px; }
.plist li { height: 20px; display: grid; grid-template-columns: 16px 1fr; column-gap: 2px; align-items: center; padding-left: 22px; background: #3e3e3e; color: #e0e0e0; }
.plist li > svg { justify-self: center; color: #a8a8a8; }
.plist .cat { background: #2f2f2f; grid-template-columns: 8px 1fr; column-gap: 3px; padding-left: 1px; font-weight: bold; text-shadow: 1px 1px #000; color: #dcdcdc; }
.plist .cat > svg { color: #c8c8c8; }
.hierarchy .search { margin: 0 6px 4px; }
.tree li { display: flex; align-items: center; gap: 2px; height: 16px; color: #cfcfcf; margin: 0 2px; padding-right: 3px; }
.tree li > i { width: 15px; display: grid; place-items: center; color: #a8a8a8; }
.tree .b { font-weight: bold; color: #dedede; }
.tree .eye { width: 13px; height: 10px; margin-left: auto; color: #dcdcdc; }
.tree .tri { color: #c8c8c8; }
.tree .l0 { padding-left: 1px; gap: 3px; } .l1 { padding-left: 11px; } .l2 { padding-left: 21px; } .l3 { padding-left: 31px; } .l4 { padding-left: 41px; }
.tree .sel { background: #8a8a8a; color: #0a0a0a; } .tree .sel .tri, .tree .sel .eye { color: #000; } .tree .sel > i { color: #ddd; }

/* designer viewport */
.corner::before { content: ""; position: absolute; left: 0; top: 0; width: 10px; height: 10px; background: #b8972c; clip-path: polygon(0 0, 100% 0, 0 100%); z-index: -1; }
.designer { flex: 1; min-width: 0; position: relative; z-index: 0; display: grid; grid-template: 18px 1fr / 18px 1fr; border: 2px solid #606060; border-right-width: 3px; background: #2e2e2e; border-radius: 0 0 3px 3px; overflow: hidden; }
.designer::before { clip-path: polygon(0 0, 100% 0, 90% 10%, 10% 10%, 10% 90%, 0 100%); }
.ruler-h { grid-column: 2; border-bottom: 1px solid #6a6a6a; overflow: hidden; position: relative; }
.ruler-v { grid-column: 1; grid-row: 2; border-right: 1px solid #6a6a6a; overflow: hidden; position: relative; }
.ruler-h ol, .ruler-v ol { display: flex; font-size: 9px; line-height: 11px; color: #9a9a9a; }
.ruler-h ol { width: 1282px; margin-left: -52px; height: 17px; }
.ruler-v ol { height: 933px; margin-top: -36px; flex-direction: column; }
.ruler-h li { flex: 1; text-align: center; padding-top: 3px;
  background: linear-gradient(#686868, #686868) 50% 100% / 1px 7px no-repeat, linear-gradient(#686868, #686868) 0 100% / 1px 5px no-repeat, repeating-linear-gradient(90deg, #686868 0 1px, transparent 1px 10%) 0 100% / 100% 3px no-repeat; }
.ruler-v li { flex: 1; display: flex; flex-direction: column; justify-content: center; padding-left: 4px;
  background: linear-gradient(#686868, #686868) 100% 50% / 7px 1px no-repeat, linear-gradient(#686868, #686868) 100% 0 / 5px 1px no-repeat, repeating-linear-gradient(#686868 0 1px, transparent 1px 10%) 100% 0 / 3px 100% no-repeat; }
.cursor-mark { position: absolute; background: #16c516; }
.ruler-h .cursor-mark { left: 429px; top: 0; width: 1px; height: 17px; }
.ruler-v .cursor-mark { left: 0; top: 90px; width: 17px; height: 1px; }
.canvas { position: relative; overflow: hidden; background: #262626; min-height: 0; }
.grid-bg { position: absolute; width: 100%; height: 100%; }
.hud { position: absolute; font-weight: bold; font-size: 19px; line-height: 22px; color: #5e5e5e; display: flex; gap: 8px; align-items: center; }
.zoom { left: 6px; top: 5px; } .res { left: 6px; bottom: 3px; } .dpi { right: 8px; bottom: 3px; }
.stage { position: absolute; left: 35px; top: 110px; width: 1120px; height: 630px; }
.stage, .stage .dash {
  background:
    repeating-linear-gradient(90deg, #c4c4c4 0 5px, #222 5px 8px) 0 0 / 100% 1px no-repeat,
    repeating-linear-gradient(90deg, #c4c4c4 0 5px, #222 5px 8px) 0 100% / 100% 1px no-repeat,
    repeating-linear-gradient(#c4c4c4 0 5px, #222 5px 8px) 0 0 / 1px 100% no-repeat,
    repeating-linear-gradient(#c4c4c4 0 5px, #222 5px 8px) 100% 0 / 1px 100% no-repeat;
}
.widget { position: absolute; color: #fff; font-weight: bold; font-size: 18px; line-height: 22px; }
.timer { left: 492px; top: 25px; width: 203px; height: 29px; display: flex; align-items: center; padding-left: 3px; }
.timer .num { border-left: 1px dashed #999; margin-left: 8px; padding-left: 2px; line-height: 27px; }
.game-over { left: 378px; top: 149px; width: 364px; text-align: center; font-size: 65px; line-height: 80px; color: #c6024e; white-space: nowrap; }
.inventory { left: 31px; top: 284px; width: 216px; height: 66px; border: 2px solid #00e400; }
.inv-inner { height: 62px; padding: 1px; }
.widget h3 { text-align: center; height: 22px; }
.slots { display: flex; gap: 2px; }
.slots i { flex: 1; height: 38px; background: #fff; border: 3px solid #b9b9b9; border-top-color: #d2d2d2; border-right-color: #a2a2a2; border-top-width: 2px; }
.handles { left: 24px; top: 277px; }
.anchor { left: -33px; top: 282px; }
.action { left: 82px; top: 358px; width: 114px; height: 93px; padding: 1px; display: flex; flex-direction: column; gap: 2px; }
.action h3 { height: 19px; }
.action button { height: 21px; width: 100%; flex: none; background: linear-gradient(#dedede, #9f9f9f); color: #0c0c0c; font-size: 16px; line-height: 20px; font-weight: bold; }
.status { left: 9px; top: 519px; width: 224px; height: 54px; display: flex; font-size: 16px; line-height: 18px; }
.names { width: 64px; display: flex; flex-direction: column; text-align: right; padding-right: 6px; border-right: 1px dashed #999; white-space: nowrap; }
.bars { flex: 1; display: flex; flex-direction: column; gap: 1px; padding: 1px 1px 1px 0; }
.bars i { flex: 1; }
.red { background: linear-gradient(#c62a25, #a82320); } .green { background: linear-gradient(#1fe64d, #18cf40); } .blue { background: linear-gradient(#6c8be4, #5c78cf); }
.lives { left: 58px; top: 589px; width: 144px; height: 24px; display: flex; align-items: center; gap: 6px; white-space: nowrap; }
.view-tools { position: absolute; right: 0; top: 2px; display: flex; gap: 1px; color: #111; font-weight: bold; }
.pair { display: flex; border: 1px solid #0c0c0c; border-radius: 7px; overflow: hidden; background: #a8a8a8; height: 25px; margin-right: 3px; }
.pair + .pair { margin-right: 0; }
.pair button { width: 23px; display: grid; place-items: center; }
.pair .on { background: #bb730b; }
.pair .r { color: #444; }
.pair .snap { width: 24px; border-left: 1px solid #111; font-size: 13px; align-content: center; line-height: 14px; }
.snap::after { content: ""; width: 4px; height: 1px; background: #111; margin-top: 3px; }
.pill { width: 25px; height: 25px; background: #a8a8a8; border: 1px solid #0c0c0c; border-radius: 7px; display: flex; align-items: center; justify-content: center; gap: 3px; white-space: nowrap; }
.pill.screen { width: 81px; }
.pill.fill { width: 75px; }
.pill.txt::after { content: ""; border: 4px solid transparent; border-top: 5px solid #111; border-bottom: 0; }

/* details */
.details { width: 418px; flex: none; margin-left: 5px; }
.details .ptab { margin-left: 3px; }
.details .pbody { padding: 2px 2px 0 1px; }
.dname { display: flex; align-items: center; height: 18px; padding-left: 4px; overflow: hidden; white-space: nowrap; }
.dname svg { color: #fff; }
.name { width: 200px; height: 18px; background: #dedede; border-radius: 3px; color: #111; padding-left: 5px; margin: 0 7px; flex: none; }
.dname label { margin: 0 19px 0 4px; }
.dname a { color: #d6d6d6; text-decoration: none; border-bottom: 1px dotted #ccc; }
input[type=checkbox] { appearance: none; width: 14px; height: 14px; background: #a9a9a9; border-radius: 2px; flex: none; display: grid; place-items: center; }
input[type=checkbox]:checked { background: #d5d5d5; }
input[type=checkbox]:checked::after { content: ""; width: 11px; height: 10px; background: #6a6a6a; clip-path: polygon(0 50%, 20% 35%, 38% 62%, 80% 0, 100% 14%, 42% 100%); }
.dsearch { display: flex; align-items: center; height: 24px; margin: 6px 0 4px; gap: 4px; }
.dsearch .search { flex: 1; }
.matrix { width: 27px; height: 23px; border: 1px solid #eee; outline: 1px solid #333; background: linear-gradient(#d8d8d8, #b0b0b0); display: grid; place-items: center; }
.dsearch .arrow { border-width: 4px 4px 0; border-top-color: #bbb; margin-right: 1px; }
.group { margin-bottom: 2px; border-radius: 3px; overflow: hidden; background: linear-gradient(90deg, transparent calc(100% - 8px), #4a4a4a calc(100% - 8px) calc(100% - 7px), transparent calc(100% - 7px)), #3e3e3e; }
.group h3 { height: 22px; display: flex; align-items: center; gap: 3px; padding-left: 3px; background: #2f2f2f; font-weight: bold; text-shadow: 1px 1px #000; }
.group .tri { color: #c8c8c8; }
.rows { padding-bottom: 2px; font-size: 11px; }
.row { display: flex; align-items: center; }
.h22 { height: 22px; } .h24 { height: 24px; } .h25 { height: 25px; } .h26 { height: 26px; } .h27 { height: 27px; } .h33 { height: 33px; }
.lab { width: 138px; align-self: stretch; border-right: 1px solid #2c2c2c; margin-right: 5px; padding: 0 1px 0 16px; display: flex; align-items: center; color: #c4c4c4; flex: none; }
.lab .tri { margin: 0 4px 0 -12px; }
.key { width: 11px; height: 11px; margin-left: auto; }
.cur { padding-left: 17px; } .cur label { margin-left: 3px; color: #777; }
.num-in { display: flex; align-items: center; height: 17px; background: #d6d6d6; border-radius: 3px; color: #222; padding: 0 5px 0 4px; }
.num-in input { flex: 1; min-width: 0; }
.num-in label { width: 13px; }
.num-in svg { width: 9px; height: 9px; color: #111; }
.w109.num-in { width: 109px; } .w118.num-in { width: 118px; margin-right: 3px; }
.reset { width: 8px; height: 8px; margin-left: 6px; }
.rows input[type=checkbox] { margin-left: 1px; }
.cur input[type=checkbox] { margin-left: 0; }
.tall ~ .reset { margin-left: 3px; }
.plain { width: 179px; height: 20px; background: #d6d6d6; border-radius: 3px; color: #222; }
.btn { height: 20px; padding: 0 4px; border: 1px solid #ececec; outline: 1px solid #222; background: linear-gradient(#e0e0e0, #a9a9a9); color: #111; display: flex; align-items: center; font-size: 12px; }
.btn .arrow { border-width: 5px 4px 0; margin-left: 1px; }
.bound { margin-left: 19px; gap: 4px; font-size: 11px; padding: 0 3px; }
.bind { width: 42px; margin-left: 2px; padding: 0 0 0 5px; }
.bind.end { margin-left: auto; margin-right: 18px; }
.esc { width: 57px; padding: 0 0 0 3px; margin-left: 1px; }
.arrow.light { border-width: 4px 4px 0; border-top-color: #bbb; margin-left: 6px; }
.rows hr { height: 6px; margin: 1px 16px 2px 0; border-top: 2px solid #2b2b2b; background: linear-gradient(#383838, #3e3e3e); }
.back { margin-left: 10px; }
.mag { width: 14px; height: 14px; margin-left: 10px; color: #b8b8b8; }
.more { width: 100%; height: 15px; border-top: 1px solid #2f2f2f; background: #464646; display: grid; place-items: center; padding-right: 16px; margin-top: 1px; }
.flush { padding-bottom: 0; }

/* bottom dock */
.bottom { height: 91px; flex: none; display: flex; padding: 5px 1px 0; }
.animations { width: 287px; flex: none; margin-right: 5px; }
.anim-bar { display: flex; gap: 2px; padding: 0 6px 0 4px; align-items: center; }
.add { width: 82px; height: 22px; padding-left: 4px; display: flex; align-items: center; gap: 3px; font-weight: bold; color: #fff; background: #4fa854; border: 1px solid #3f8a44; text-shadow: 1px 1px #111; }
.anim-bar .search { flex: 1; }
.animations .dark { padding-top: 4px; }
.sequencer { flex: 1; min-width: 0; position: relative; z-index: 0; border: 2px solid #5c5c5c; background: #404040; border-radius: 3px; display: flex; flex-direction: column; }
.seq-tools { display: flex; align-items: center; height: 30px; padding-left: 11px; gap: 4px; flex: none; }
.seq-tools .arrow { border-width: 4px 4px 0; border-top-color: #999; }
.seq-tools .sep { margin: 2px 4px; }
.seq-tools .arrow.wide { margin: 0 2px 0 7px; }
.seq-tools .sep.tight { margin: 2px 0 2px 2px; }
.magnet { width: 32px; height: 30px; background: #8e7a6e; display: grid; place-items: center; border-radius: 2px; }
.snapc { width: 64px; height: 22px; margin-left: 8px; color: #222; }
.snapc select { background: linear-gradient(90deg, #808080 50px, #959595 50px); border-color: #999; outline-color: #333; padding-left: 6px; }
.seq-body { flex: 1; min-height: 0; display: flex; }
.seq-left { width: 491px; flex: none; border-right: 3px solid #585858; display: flex; flex-direction: column; align-items: center; gap: 2px; background: linear-gradient(transparent 18px, #2c2c2c 18px 19px, transparent 19px); }
.seq-filter { display: flex; align-self: stretch; align-items: center; gap: 3px; padding: 2px 7px 0 6px; height: 24px; }
.addtrack { display: flex; align-items: center; gap: 5px; width: 58px; height: 21px; padding-left: 4px; background: #6d7f6e; border: 1px solid #7b937c; color: #aaa; font-weight: bold; text-shadow: 1px 1px #222; }
.addtrack .arrow { border-width: 4px 4px 0; border-top-color: #aaa; }
.seq-filter .search { flex: 1; background: #7e7e7e; }
.seq-filter .search svg { color: #222; }
.seq-filter .search input::placeholder { color: #555; }
.timeline { flex: 1; min-width: 0; position: relative; overflow: hidden; background: linear-gradient(#353535 18px, #222 18px 19px, #333 19px); }
.timeline::after { content: ""; position: absolute; left: 731px; right: 0; top: 0; bottom: 0; background: rgba(18,18,18,.6); border-left: 1px solid #a52222; }
.start { position: absolute; left: 0; top: 0; bottom: 0; width: 6px; background: #6f5f5c; border-left: 1px solid #3f6b34; }
.t-now, .t-end { position: absolute; left: 10px; font-size: 11px; line-height: 10px; color: #b5b5b5; }
.t-now { top: 6px; } .t-end { top: 31px; }
.timeline ol { display: flex; padding-top: 20px; width: 1168px; }
.timeline li { flex: 1; height: 10px; padding-left: 6px; font-size: 11px; line-height: 10px; color: #6c6c6c;
  background: linear-gradient(#777, #777) 0 0 / 1px 9px no-repeat, linear-gradient(#777, #777) 50% 0 / 1px 9px no-repeat, repeating-linear-gradient(90deg, #777 0 1px, transparent 1px 10%) 0 0 / 100% 1px no-repeat, repeating-linear-gradient(90deg, #777 0 1px, transparent 1px 10%) 0 8px / 100% 1px no-repeat; }
.noanim { position: absolute; inset: 27px 3px auto 0; text-align: center; font-size: 24px; line-height: 24px; color: #e4e4e4; text-shadow: 1px 1px #000; z-index: 1; }
```
